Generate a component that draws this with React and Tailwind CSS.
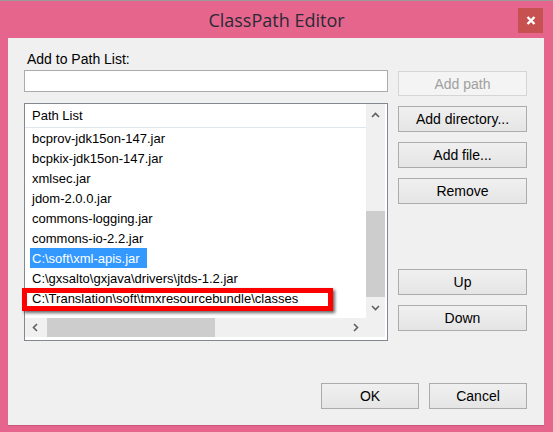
import React from "react";

const rows = [
  "bcprov-jdk15on-147.jar",
  "bcpkix-jdk15on-147.jar",
  "xmlsec.jar",
  "jdom-2.0.0.jar",
  "commons-logging.jar",
  "commons-io-2.2.jar",
  "C:\\soft\\xml-apis.jar",
  "C:\\gxsalto\\gxjava\\drivers\\jtds-1.2.jar",
  "C:\\Translation\\soft\\tmxresourcebundle\\classes",
];

function Chevron({ dir }) {
  const d = {
    up: "M1 6 L4.5 2.5 L8 6",
    down: "M1 3 L4.5 6.5 L8 3",
    left: "M6 1 L2.5 4.5 L6 8",
    right: "M3 1 L6.5 4.5 L3 8",
  }[dir];
  return (
    <svg width="9" height="9" viewBox="0 0 9 9">
      <path d={d} fill="none" stroke="#606060" strokeWidth="1.6" />
    </svg>
  );
}

function Btn({ children, disabled, className = "" }) {
  return (
    <button
      className={`flex items-center justify-center border text-[14px] leading-[16px] ${
        disabled
          ? "border-[#d5d5d5] bg-[#f4f4f4] text-[#a0a0a0]"
          : "border-[#acacac] bg-gradient-to-b from-[#f0f0f0] to-[#e5e5e5] text-black"
      } ${className}`}
    >
      {children}
    </button>
  );
}

export default function App() {
  return (
    <div className="w-[553px] h-[432px] bg-[#e6658d] border-t border-[#9a9a9a] flex flex-col font-['Liberation_Sans',Arial,sans-serif]">
      {/* Title bar */}
      <div className="h-[37px] flex items-start">
        <div className="flex-1 pl-[35px] pt-[7px] text-center text-[18px] leading-[24px] text-[#2a2a36] font-['Open_Sans',sans-serif]">
          ClassPath Editor
        </div>
        <div className="mt-[7px] mr-[10px] w-[25px] h-[25px] bg-[#c75050] flex items-center justify-center">
          <svg width="10" height="9" viewBox="0 0 10 9">
            <path d="M1.5 1 L8.5 8 M8.5 1 L1.5 8" stroke="white" strokeWidth="2.4" />
          </svg>
        </div>
      </div>

      {/* Client area */}
      <div className="relative ml-[8px] w-[536px] h-[387px] bg-[#f0f0f0] shadow-[0_1px_0_#c8557c] flex flex-col pt-[14px] pl-[16px] pr-[17px] pb-[16px]">
        <div className="flex gap-[10px]">
          {/* Left column */}
          <div className="w-[364px] flex flex-col">
            <div className="h-[15px] leading-[15px] text-[14px] pl-[3px] text-black">Add to Path List:</div>
            <div className="mt-[3px] h-[22px] border border-[#ababab] bg-white" />
            <div className="mt-[11px] h-[238px] border border-[#828790] bg-white flex flex-col pr-[2px] pb-[3px]">
              <div className="flex h-[214px]">
                <div className="w-[341px] overflow-hidden">
                  <div className="h-[24px] border-b border-[#dfe6ef] flex items-center pl-[7px] text-[13px] leading-[15px]">
                    Path List
                  </div>
                  {rows.map((r, i) => (
                    <div key={r} className="h-[20px] flex items-center text-[13px] leading-[15px] whitespace-nowrap">
                      {i === 6 ? (
                        <span className="ml-[5px] h-[20px] flex items-center pl-[2px] pr-[7px] bg-[#3399ff] text-white">
                          {r}
                        </span>
                      ) : (
                        <span className="ml-[7px]">{r}</span>
                      )}
                    </div>
                  ))}
                </div>
                <div className="w-[19px] bg-[#f0f0f0] flex flex-col">
                  <div className="h-[22px] flex items-center justify-center">
                    <Chevron dir="up" />
                  </div>
                  <div className="flex-1" />
                  <div className="h-[86px] bg-[#cdcdcd]" />
                  <div className="h-[21px] flex items-center justify-center">
                    <Chevron dir="down" />
                  </div>
                </div>
              </div>
              <div className="flex h-[19px]">
                <div className="w-[341px] bg-[#f0f0f0] flex">
                  <div className="w-[20px] flex items-center justify-center">
                    <Chevron dir="left" />
                  </div>
                  <div className="ml-[2px] w-[168px] bg-[#cdcdcd]" />
                  <div className="flex-1" />
                  <div className="w-[21px] flex items-center justify-center">
                    <Chevron dir="right" />
                  </div>
                </div>
                <div className="w-[19px] bg-[#f0f0f0]" />
              </div>
            </div>
          </div>

          {/* Right column */}
          <div className="w-[129px] flex flex-col pt-[19px]">
            <Btn disabled className="h-[25px]">Add path</Btn>
            <Btn className="mt-[10px] h-[26px]">Add directory...</Btn>
            <Btn className="mt-[10px] h-[26px]">Add file...</Btn>
            <Btn className="mt-[10px] h-[26px]">Remove</Btn>
            <Btn className="mt-[65px] h-[26px]">Up</Btn>
            <Btn className="mt-[10px] h-[26px]">Down</Btn>
          </div>
        </div>

        {/* Bottom buttons */}
        <div className="mt-auto flex justify-end gap-[10px]">
          <Btn className="w-[98px] h-[26px]">OK</Btn>
          <Btn className="w-[98px] h-[26px]">Cancel</Btn>
        </div>

        {/* Red annotation box */}
        <div className="absolute left-[14px] top-[250px] w-[311px] h-[23px] border-[5px] border-[#ff0000] shadow-[2px_2px_3px_rgba(0,0,0,0.6)]" />
      </div>
    </div>
  );
}
